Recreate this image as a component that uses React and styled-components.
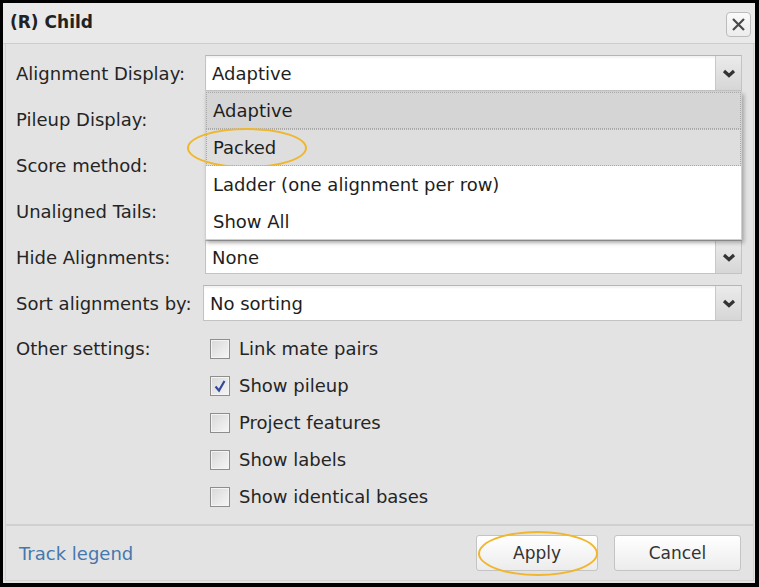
import React from "react";
import styled, { createGlobalStyle } from "styled-components";

const GlobalStyle = createGlobalStyle`
  html, body { margin: 0; padding: 0; background: #fff; }
  * { box-sizing: border-box; }
  body { font-family: "DejaVu Sans", Verdana, sans-serif; }
`;

const Frame = styled.div`
  width: 759px;
  height: 587px;
  border: 3px solid #000;
  border-right-width: 4px;
  border-bottom-width: 4px;
  background: #e3e3e3;
  display: flex;
  flex-direction: column;
  overflow: hidden;
`;

const TitleBar = styled.div`
  height: 41px;
  flex: none;
  display: flex;
  align-items: center;
  justify-content: space-between;
  padding: 0 4px 0 7px;
  background: #e9e9e9;
  border-bottom: 1px solid #cdcdcd;
`;

const Title = styled.div`
  font-family: "DejaVu Sans", Verdana, sans-serif;
  font-weight: bold;
  font-size: 17px;
  color: #222;
  margin-top: -2px;
`;

const CloseButton = styled.button`
  width: 25px;
  height: 25px;
  padding: 0;
  margin-top: 2px;
  border: 1px solid #bcbcbc;
  border-radius: 4px;
  background: linear-gradient(#fafafa, #ececec);
  display: flex;
  align-items: center;
  justify-content: center;
`;

const Panel = styled.div`
  flex: 1;
  display: flex;
  flex-direction: column;
  margin: 0 1px 2px 2px;
  border: 1px solid #d3d3d3;
  border-top: none;
`;

const Body = styled.div`
  flex: 1;
  display: grid;
  grid-template-columns: 187px 1fr;
  grid-auto-rows: 46px;
  align-items: center;
  padding: 6px 11px 0 10px;
`;

const Label = styled.div`
  font-size: 18px;
  color: #252525;
  white-space: nowrap;
  align-self: ${(p) => (p.$top ? "start" : "center")};
  padding-top: ${(p) => (p.$top ? "12px" : "0")};
`;

const SelectBox = styled.div`
  position: relative;
  height: ${(p) => (p.$tall ? "36px" : "34px")};
  margin-left: ${(p) => p.$shift || 0}px;
  display: flex;
  background: #fff;
  border: 1px solid #c3c3c3;
  border-top-color: #b5b5b5;
  box-shadow: inset 0 2px 2px rgba(0, 0, 0, 0.05);
`;

const SelectValue = styled.div`
  flex: 1;
  display: flex;
  align-items: center;
  padding-left: 6px;
  font-size: 18px;
  color: #1e1e1e;
`;

const ArrowButton = styled.div`
  width: 26px;
  flex: none;
  display: flex;
  align-items: center;
  justify-content: center;
  background: linear-gradient(#ebebeb, #d6d6d6);
  border-left: 1px solid #c8c8c8;
`;

const Menu = styled.div`
  position: absolute;
  top: calc(100% + 1px);
  left: -1px;
  right: -1px;
  z-index: 5;
  background: #fff;
  border: 1px solid #cfcfcf;
  box-shadow: 2px 3px 4px rgba(0, 0, 0, 0.28);
`;

const MenuItem = styled.div`
  position: relative;
  height: ${(p) => (p.$h ? p.$h : 37)}px;
  display: flex;
  align-items: center;
  padding-left: 6px;
  font-size: 18px;
  color: #1e1e1e;
  background: ${(p) => (p.$selected ? "#d5d5d5" : p.$hover ? "#dedede" : "#fff")};
  border: 1px dotted ${(p) => (p.$selected || p.$hover ? "#a9a9a9" : "transparent")};
`;

const Highlight = styled.div`
  position: absolute;
  left: ${(p) => p.$l}px;
  top: ${(p) => p.$t}px;
  width: ${(p) => p.$w}px;
  height: ${(p) => p.$h}px;
  border: 2.5px solid #f0b62c;
  border-radius: 50%;
  pointer-events: none;
`;

const CheckList = styled.div`
  grid-row: span 4;
  align-self: start;
  padding-top: 4px;
  display: flex;
  flex-direction: column;
`;

const CheckRow = styled.label`
  height: 37px;
  display: flex;
  align-items: center;
  gap: 9px;
  padding-left: 7px;
  font-size: 18px;
  color: #252525;
`;

const Box = styled.span`
  width: 20px;
  height: 20px;
  display: flex;
  align-items: center;
  justify-content: center;
  border: 1px solid #8e8e8e;
  background: linear-gradient(135deg, #d8d8d8, #f6f6f6);
  box-shadow: inset 0 0 0 1px #f4f4f4;
`;

const Footer = styled.div`
  height: 56px;
  flex: none;
  display: flex;
  align-items: center;
  justify-content: space-between;
  padding: 0 12px 0 13px;
  border-top: 2px solid #d0d0d0;
`;

const LegendLink = styled.a`
  font-size: 18px;
  color: #4677ad;
  text-decoration: none;
`;

const ButtonGroup = styled.div`
  display: flex;
  gap: 16px;
`;

const Button = styled.button`
  position: relative;
  width: ${(p) => p.$w}px;
  height: 36px;
  font-family: "DejaVu Sans", Verdana, sans-serif;
  font-size: 17px;
  color: #333;
  background: linear-gradient(#ffffff, #ececec);
  border: 1px solid #c4c4c4;
  border-radius: 3px;
`;

const Chevron = () => (
  <svg width="14" height="9" viewBox="0 0 14 9">
    <polyline points="2,2 7,6.5 12,2" fill="none" stroke="#333" strokeWidth="3.2" />
  </svg>
);

const Select = ({ value, children, tall, shift }) => (
  <SelectBox $tall={tall} $shift={shift}>
    <SelectValue>{value}</SelectValue>
    <ArrowButton>
      <Chevron />
    </ArrowButton>
    {children}
  </SelectBox>
);

const Check = ({ checked, label }) => (
  <CheckRow>
    <Box>
      {checked && (
        <svg width="14" height="14" viewBox="0 0 14 14">
          <polyline points="2.5,7.5 6,11.5 11.5,2" fill="none" stroke="#34489c" strokeWidth="2.2" />
        </svg>
      )}
    </Box>
    {label}
  </CheckRow>
);

export default function App() {
  return (
    <>
      <GlobalStyle />
      <Frame>
        <TitleBar>
          <Title>(R) Child</Title>
          <CloseButton aria-label="Close">
            <svg width="15" height="15" viewBox="0 0 15 15">
              <path d="M2 2 L13 13 M13 2 L2 13" stroke="#4a4a4a" strokeWidth="2.2" />
            </svg>
          </CloseButton>
        </TitleBar>
        <Panel>
          <Body>
            <Label>Alignment Display:</Label>
            <Select value="Adaptive" tall shift={2}>
              <Menu>
                <MenuItem $selected>Adaptive</MenuItem>
                <MenuItem $hover>
                  Packed
                  <Highlight $l={-20} $t={-2} $w={120} $h={40} />
                </MenuItem>
                <MenuItem>Ladder (one alignment per row)</MenuItem>
                <MenuItem $h={36}>Show All</MenuItem>
              </Menu>
            </Select>

            <Label>Pileup Display:</Label>
            <Select value="" shift={2} />

            <Label>Score method:</Label>
            <Select value="" shift={2} />

            <Label>Unaligned Tails:</Label>
            <Select value="" shift={2} />

            <Label>Hide Alignments:</Label>
            <Select value="None" shift={2} />

            <Label>Sort alignments by:</Label>
            <Select value="No sorting" tall />

            <Label $top>Other settings:</Label>
            <CheckList>
              <Check label="Link mate pairs" />
              <Check checked label="Show pileup" />
              <Check label="Project features" />
              <Check label="Show labels" />
              <Check label="Show identical bases" />
            </CheckList>
          </Body>
          <Footer>
            <LegendLink href="#">Track legend</LegendLink>
            <ButtonGroup>
              <Button $w={122}>
                Apply
                <Highlight $l={1} $t={-5} $w={120} $h={45} />
              </Button>
              <Button $w={127}>Cancel</Button>
            </ButtonGroup>
          </Footer>
        </Panel>
      </Frame>
    </>
  );
}
